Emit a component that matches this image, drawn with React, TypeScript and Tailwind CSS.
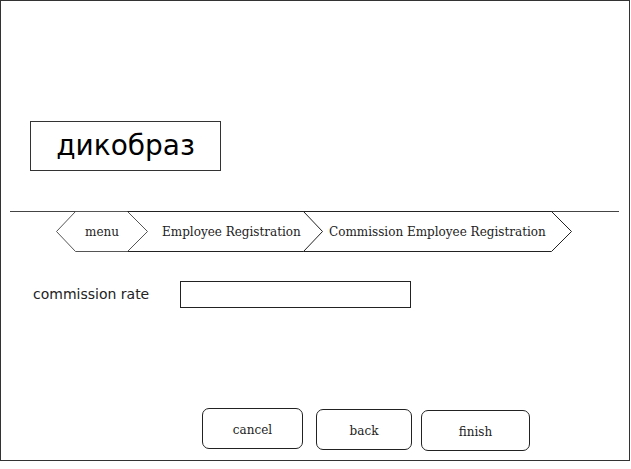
import React from 'react';

const serif = { fontFamily: '"DejaVu Serif", serif' };
const sans = { fontFamily: '"DejaVu Sans", sans-serif' };

const Breadcrumb: React.FC = () => (
  <div className="relative ml-[55px] -mt-px h-[41px] w-[516px]">
    <svg className="absolute inset-0" width="516" height="41" viewBox="0 0 516 41">
      <g fill="none" stroke="#222" strokeWidth="1">
        <path d="M19.5 0.5 L0.5 20.5 L19.5 40.5 L71.5 40.5 L91.5 20.5 L71.5 0.5 Z" stroke="#555" />
        <path d="M71.5 0.5 L247.5 0.5 L266.5 20.5 L247.5 40.5 L71.5 40.5" />
        <path d="M247.5 0.5 L495.5 0.5 L515.5 20.5 L495.5 40.5 L247.5 40.5" />
      </g>
    </svg>
    <div className="relative flex h-full items-center whitespace-nowrap text-[12px] text-[#222]" style={serif}>
      <span className="w-[92px] pt-px text-center">menu</span>
      <span className="ml-[14px] w-[167px]">Employee Registration</span>
      <span>Commission Employee Registration</span>
    </div>
  </div>
);

const Btn: React.FC<{ label: string; w: string; mt: string }> = ({ label, w, mt }) => (
  <button
    className={`${w} ${mt} h-[41px] rounded-[7px] border border-[#222] bg-white pt-[2px] text-[12px] text-[#222]`}
    style={serif}
  >
    {label}
  </button>
);

const App: React.FC = () => {
  return (
    <div className="h-[469px] w-[631px] bg-white">
      <div className="flex h-[461px] w-[630px] flex-col border border-[#333]">
        <div className="pl-[29px] pt-[120px]">
          <div
            className="flex h-[50px] w-[191px] items-center justify-center border border-[#333] text-[28px] text-black"
            style={sans}
          >
            дикобраз
          </div>
        </div>
        <div className="ml-[9px] mt-[40px] h-px w-[609px] bg-[#444]" />
        <Breadcrumb />
        <div className="mt-[29px] flex items-center">
          <span className="ml-[32px] w-[147px] text-[14px] text-[#222]" style={sans}>
            commission rate
          </span>
          <div className="h-[27px] w-[231px] border border-[#222] bg-white" />
        </div>
        <div className="mt-[100px] flex items-start">
          <div className="ml-[201px]" />
          <Btn label="cancel" w="w-[101px]" mt="mt-0" />
          <div className="w-[13px]" />
          <Btn label="back" w="w-[96px]" mt="mt-px" />
          <div className="w-[9px]" />
          <Btn label="finish" w="w-[109px]" mt="mt-[2px]" />
        </div>
      </div>
    </div>
  );
};

export default App;
